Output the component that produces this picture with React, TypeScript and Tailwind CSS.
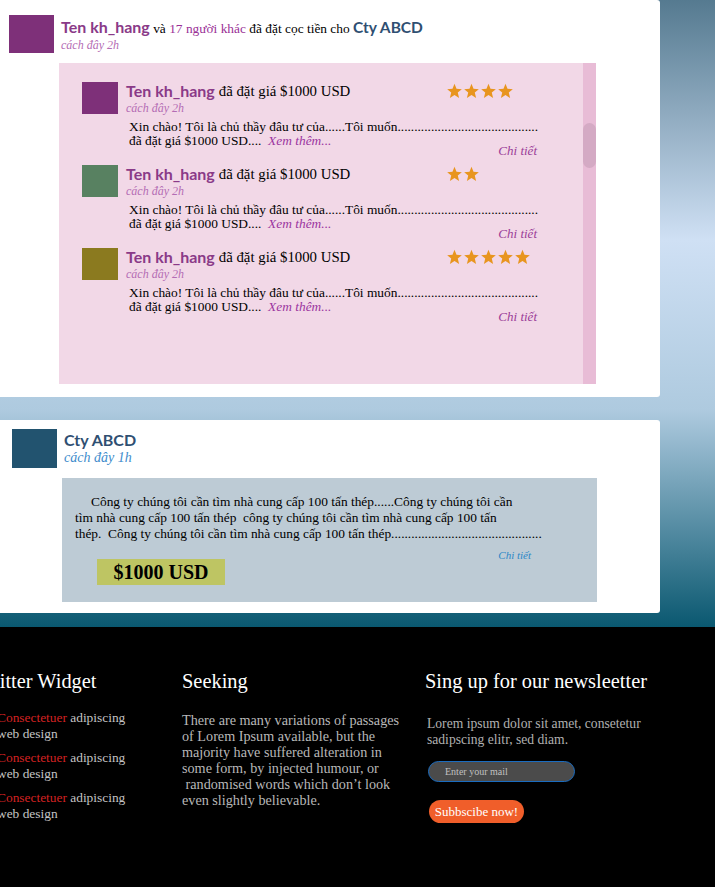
import clsx from "clsx";

const SERIF = "font-['Liberation_Serif',serif]";
const SANS_BOLD = "font-['Lato',sans-serif] font-bold";

const BIDS = [
  { id: 1, avatar: "bg-[#7e3079]", stars: 4 },
  { id: 2, avatar: "bg-[#588161]", stars: 2 },
  { id: 3, avatar: "bg-[#8b7a1f]", stars: 5 },
];

function Stars({ n }: { n: number }) {
  return (
    <div className="flex">
      {Array.from({ length: n }).map((_, i) => (
        <svg key={i} viewBox="0 0 24 24" className="w-[17px] h-[16px] fill-[#e8951f]">
          <polygon points="12,1.2 15,8.6 23,9.2 16.9,14.4 18.9,22.6 12,18.1 5.1,22.6 7.1,14.4 1,9.2 9,8.6" />
        </svg>
      ))}
    </div>
  );
}

function BidRow({ avatar, stars }: { avatar: string; stars: number }) {
  return (
    <div className="flex gap-2 h-[83px]">
      <div className={clsx("w-[36px] h-[32px] shrink-0", avatar)} />
      <div className="w-[411px]">
        <div className="flex items-start h-[18px] leading-[18px]">
          <span className={clsx(SANS_BOLD, "text-[16px] text-[#8a3a88]")}>Ten kh_hang</span>
          <span className="text-[14.8px] text-black ml-[4px]">đã đặt giá $1000 USD</span>
          <div className="ml-auto w-[91px] pt-[1px]">
            <Stars n={stars} />
          </div>
        </div>
        <div className="text-[12px] italic text-[#b46cb4] leading-[16px]">cách đây 2h</div>
        <div className="pl-[3px] mt-[4px] text-[13.4px] leading-[14px] text-black whitespace-nowrap">
          <div>Xin chào! Tôi là chủ thầy đâu tư của......Tôi muốn..........................................</div>
          <div>
            đã đặt giá $1000 USD....&nbsp;&nbsp;
            <span className="italic text-[#9b35a0]">Xem thêm...</span>
          </div>
        </div>
        <div className="text-right italic text-[13px] text-[#9a3d98] leading-[14px] -mt-[4px]">Chi tiết</div>
      </div>
    </div>
  );
}

export default function App() {
  return (
    <div className={clsx(SERIF, "w-[715px] min-h-[887px] bg-black overflow-hidden")}>
      <div className="h-[627px] pt-0 bg-[linear-gradient(to_bottom,#557a90_0px,#cfe0f4_240px,#aecadf_410px,#0a5870_627px)]">
        {/* activity card */}
        <div className="w-[660px] h-[397px] bg-white rounded-r-[3px] pt-[15px] pl-[9px]">
          <div className="flex">
            <div className="w-[45px] h-[38px] bg-[#7e3079] shrink-0" />
            <div className="ml-[7px] pt-[2px]">
              <div className="h-[20px] leading-[20px] whitespace-nowrap">
                <span className={clsx(SANS_BOLD, "text-[16px] text-[#8a3a88]")}>Ten kh_hang</span>
                <span className="text-[13.4px] text-black"> và </span>
                <span className="text-[13.4px] text-[#9a3096]">17 người khác</span>
                <span className="text-[13.4px] text-black"> đã đặt cọc tiền cho </span>
                <span className={clsx(SANS_BOLD, "text-[15.5px] text-[#2f4f72]")}>Cty ABCD</span>
              </div>
              <div className="text-[12px] italic text-[#b46cb4] leading-[14px] mt-[1px]">cách đây 2h</div>
            </div>
          </div>

          <div className="ml-[50px] mt-[10px] w-[537px] h-[321px] bg-[#f2d8e7] flex">
            <div className="flex-1 pt-[19px] pl-[23px]">
              {BIDS.map((b) => (
                <BidRow key={b.id} avatar={b.avatar} stars={b.stars} />
              ))}
            </div>
            <div className="w-[13px] bg-[#e8bcd6] pt-[60px]">
              <div className="h-[45px] rounded-full bg-[#d4aac4]" />
            </div>
          </div>
        </div>

        {/* request card */}
        <div className="mt-[23px] w-[660px] h-[193px] bg-white rounded-r-[3px] pt-[9px] pl-[12px]">
          <div className="flex">
            <div className="w-[45px] h-[39px] bg-[#22536f] shrink-0" />
            <div className="ml-[7px] pt-[2px]">
              <div className={clsx(SANS_BOLD, "text-[16px] leading-[18px] text-[#2f4f72]")}>Cty ABCD</div>
              <div className="text-[14px] italic leading-[18px] text-[#3e8ccc]">cách đây 1h</div>
            </div>
          </div>
          <div className="ml-[50px] mt-[10px] w-[535px] h-[124px] bg-[#bdcbd5] pt-[16px]">
            <div className="pl-[13px] text-[13.4px] leading-[16px] text-black whitespace-nowrap">
              <div className="pl-[16px]">Công ty chúng tôi cần tìm nhà cung cấp 100 tấn thép......Công ty chúng tôi cần</div>
              <div>tìm nhà cung cấp 100 tấn thép&nbsp; công ty chúng tôi cần tìm nhà cung cấp 100 tấn</div>
              <div>thép.&nbsp; Công ty chúng tôi cần tìm nhà cung cấp 100 tấn thép.............................................</div>
            </div>
            <div className="mt-[8px] pr-[66px] text-right text-[11px] italic leading-[11px] text-[#2b87c7]">Chi tiết</div>
            <div className="ml-[35px] -mt-[2px] w-[128px] h-[26px] bg-[#bec563] flex items-center justify-center text-[20px] font-bold text-black">
              $1000 USD
            </div>
          </div>
        </div>
      </div>

      {/* footer */}
      <div className="h-[260px] bg-black flex pt-[42px]">
        <div className="ml-[-26px] w-[208px] shrink-0">
          <div className="text-[20.4px] leading-[24px] text-white whitespace-nowrap">Twitter Widget</div>
          <div className="mt-[17px] pl-[23px] flex flex-col gap-[8px] text-[13.4px] leading-[16px] text-[#c4c4c4]">
            {[1, 2, 3].map((i) => (
              <div key={i}>
                <span className="text-[#d42222]">Consectetuer</span> adipiscing
                <br />
                web design
              </div>
            ))}
          </div>
        </div>
        <div className="w-[243px] shrink-0">
          <div className="text-[20.4px] leading-[24px] text-white">Seeking</div>
          <div className="mt-[19px] text-[14.2px] leading-[16px] text-[#b8b8b8] whitespace-nowrap">
            <div>There are many variations of passages</div>
            <div>of Lorem Ipsum available, but the</div>
            <div>majority have suffered alteration in</div>
            <div>some form, by injected humour, or</div>
            <div>&nbsp;randomised words which don’t look</div>
            <div>even slightly believable.</div>
          </div>
        </div>
        <div className="flex-1">
          <div className="text-[20.4px] leading-[24px] text-white whitespace-nowrap">Sing up for our newsleetter</div>
          <div className="mt-[23px] pl-[2px] text-[13.6px] leading-[16px] text-[#b0b0b0]">
            <div>Lorem ipsum dolor sit amet, consetetur</div>
            <div>sadipscing elitr, sed diam.</div>
          </div>
          <input
            placeholder="Enter your mail"
            className="block mt-[13px] ml-[3px] w-[147px] h-[21px] rounded-full bg-[#4b4b4b] border-[1.5px] border-[#1a6cc0] pl-[16px] text-[10px] text-[#c0c0c0] placeholder:text-[#c0c0c0] outline-none"
          />
          <button className="block mt-[18px] ml-[4px] w-[95px] h-[23px] rounded-full bg-[#f05e2a] text-[13px] text-white leading-[23px]">
            Subbscibe now!
          </button>
        </div>
      </div>
    </div>
  );
}
